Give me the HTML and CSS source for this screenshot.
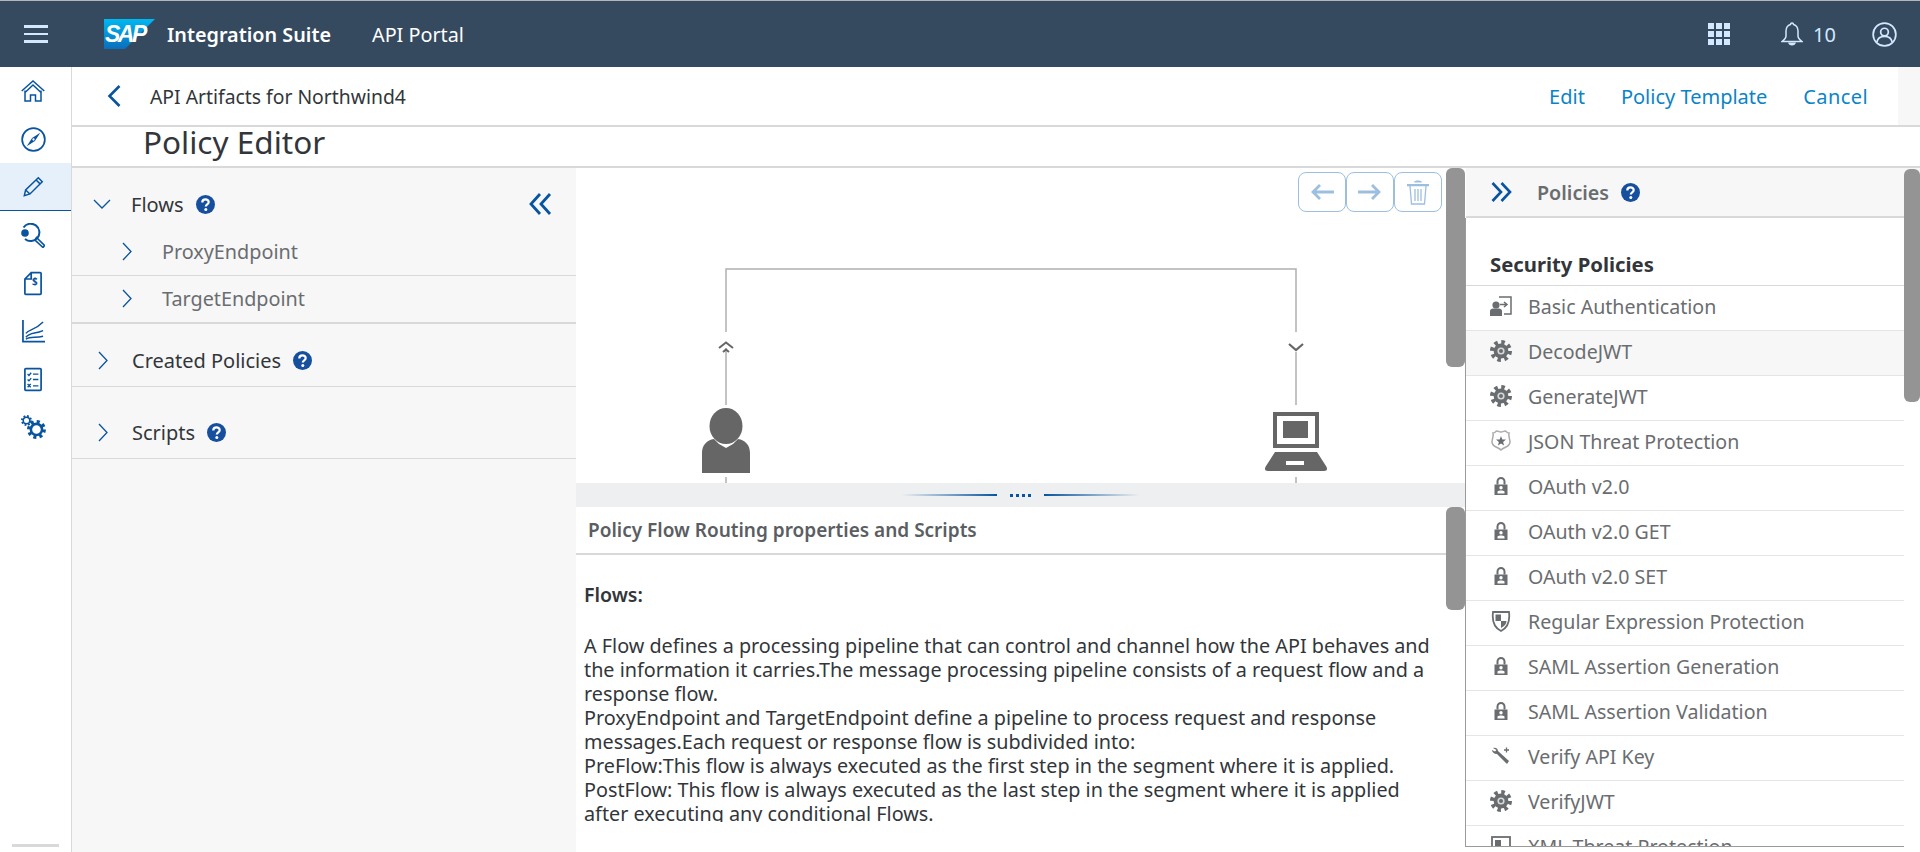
FILE: index.html
```html
<!DOCTYPE html>
<html lang="en">
<head>
<meta charset="utf-8">
<title>Policy Editor</title>
<link rel="stylesheet" href="styles.css">
</head>
<body>
<svg class="defs" width="0" height="0" aria-hidden="true">
  <defs>
    <g id="i-lock">
      <path d="M7.500 9.500V6.500a3.500 3.500 0 0 1 7 0v3" fill="none" stroke="currentColor" stroke-width="2"/>
      <path fill-rule="evenodd" d="M4.500 9.500h13v10.500h-13zM11 11a1.700 1.700 0 1 0 0 3.400A1.700 1.700 0 0 0 11 11zM7.500 16.500v2h7v-2c-1.500-1.200-5.500-1.200-7 0z" fill="currentColor"/>
    </g>
    <g id="i-gear">
      <circle cx="11" cy="11" r="8.800" fill="none" stroke="currentColor" stroke-width="4.400" stroke-dasharray="3.450 3.460"/>
      <circle cx="11" cy="11" r="7.400" fill="currentColor"/>
      <circle cx="11" cy="11" r="3.600" fill="#d8d8d8"/>
      <circle cx="11" cy="11" r="2" fill="currentColor"/>
    </g>
    <g id="i-gear-open">
      <circle cx="11" cy="11" r="9" fill="none" stroke="currentColor" stroke-width="4" stroke-dasharray="3.530 3.540"/>
      <circle cx="11" cy="11" r="6.500" fill="none" stroke="currentColor" stroke-width="3"/>
    </g>
    <g id="i-help">
      <circle cx="9.500" cy="9.500" r="9.500" fill="#174f9f"/>
      <path d="M6.300 7.400c0-1.900 1.400-3 3.200-3s3.200 1 3.200 2.700c0 2.300-2.900 2.300-2.900 4.400" fill="none" stroke="#fff" stroke-width="2.200"/>
      <circle cx="9.800" cy="14.500" r="1.500" fill="#fff"/>
    </g>
  </defs>
</svg>
<div class="topline"></div>
<header class="shell">
  <button class="burger" aria-label="Menu"><span></span><span></span><span></span></button>
  <svg class="sap" width="51" height="30" viewBox="0 0 51 30" aria-hidden="true">
    <defs><linearGradient id="sapg" x1="0" y1="0" x2="0" y2="1"><stop offset="0" stop-color="#00b8f1"/><stop offset="1" stop-color="#0a6ebd"/></linearGradient></defs>
    <path d="M0 0h51L21 30H0z" fill="url(#sapg)"/>
    <text x="1" y="23" class="sap-text">SAP</text>
  </svg>
  <span class="brand">Integration Suite</span>
  <span class="portal">API Portal</span>
  <div class="shell-right">
    <svg width="22" height="22" viewBox="0 0 22 22" aria-hidden="true">
      <g fill="#d1e8ff">
        <rect x="0" y="0" width="6" height="6"/><rect x="8" y="0" width="6" height="6"/><rect x="16" y="0" width="6" height="6"/>
        <rect x="0" y="8" width="6" height="6"/><rect x="8" y="8" width="6" height="6"/><rect x="16" y="8" width="6" height="6"/>
        <rect x="0" y="16" width="6" height="6"/><rect x="8" y="16" width="6" height="6"/><rect x="16" y="16" width="6" height="6"/>
      </g>
    </svg>
    <svg width="22" height="24" viewBox="0 0 22 24" class="bell" aria-hidden="true">
      <path d="M11 1c-1 0-1.500.8-1.500 1.500C6.500 3.500 5 6 5 9v5c0 2-2 4-4 5.500h20c-2-1.500-4-3.500-4-5.500V9c0-3-1.500-5.500-4.500-6.500C12.500 1.800 12 1 11 1z" fill="none" stroke="#d1e8ff" stroke-width="1.500"/>
      <path d="M7 20.500h8c-.5 2-2 3-4 3s-3.500-1-4-3z" fill="#d1e8ff"/>
    </svg>
    <span class="count">10</span>
    <svg width="25" height="25" viewBox="0 0 26 26" class="user" aria-hidden="true">
      <circle cx="13" cy="13" r="11.800" fill="none" stroke="#d1e8ff" stroke-width="1.800"/>
      <circle cx="13" cy="10.500" r="4" fill="none" stroke="#d1e8ff" stroke-width="1.800"/>
      <path d="M5 21c1-4.500 4-6 8-6s7 1.500 8 6" fill="none" stroke="#d1e8ff" stroke-width="1.800"/>
    </svg>
  </div>
</header>
<div class="body">
  <nav class="side">
    <a class="side-item"><svg width="24" height="22" viewBox="0 0 24 22" aria-hidden="true"><path d="M.7 11 12 1l11.300 10M4 10.500V21h5.500v-6h5v6H20V10.500M3.500 13 12 5l8.500 8" fill="none" stroke="currentColor" stroke-width="1.500"/></svg></a>
    <a class="side-item"><svg width="25" height="25" viewBox="0 0 26 26" aria-hidden="true"><circle cx="13" cy="13" r="11.800" fill="none" stroke="currentColor" stroke-width="1.800"/><path d="M20 6 14.500 14.500 6 20l5.500-8.500z" fill="currentColor"/><circle cx="13" cy="13" r="1.200" fill="#fff"/></svg></a>
    <a class="side-item active"><svg width="21" height="21" viewBox="0 0 24 24" aria-hidden="true"><path d="M1.500 22.500 3 16 17.500 2l4.500 4.500L8 20.500zM3 16l5 4.500M15 4.500l4.500 4.500" fill="none" stroke="currentColor" stroke-width="1.700"/></svg></a>
    <a class="side-item"><svg width="24" height="25" viewBox="0 0 24 25" aria-hidden="true"><path d="M2.500 4.500A8.700 8.700 0 1 1 4 16" fill="none" stroke="currentColor" stroke-width="2"/><circle cx="4" cy="10" r="3.800" fill="currentColor"/><path d="m14 17 1.500-2.500 8 8-1.500 2z" fill="none" stroke="currentColor" stroke-width="1.600"/></svg></a>
    <a class="side-item"><svg width="18" height="25" viewBox="0 0 20 26" aria-hidden="true"><path d="M8 1h10a1 1 0 0 1 1 1v22a1 1 0 0 1-1 1H2a1 1 0 0 1-1-1V8zM8 1v7H1" fill="none" stroke="currentColor" stroke-width="1.900"/><text x="12" y="15" class="dollar">$</text></svg></a>
    <a class="side-item"><svg width="23" height="23" viewBox="0 0 24 24" aria-hidden="true"><path d="M1 0v22.500h23" fill="none" stroke="currentColor" stroke-width="1.800"/><path d="M4 14C8 9 12 12 22 2M4 18c5-6 9-3 18-7M4 20c5-3 10-1 18-3" fill="none" stroke="currentColor" stroke-width="1.500"/></svg></a>
    <a class="side-item"><svg width="18" height="25" viewBox="0 0 20 26" aria-hidden="true"><rect x="1" y="1" width="18" height="24" rx="1" fill="none" stroke="currentColor" stroke-width="1.900"/><path d="m4 7 1.500 1.500L8 5.500M4 13l1.500 1.500L8 11.500M4 18l3.500 3.500M7.500 18 4 21.500M10 7h6M10 13h6M10 20h6" fill="none" stroke="currentColor" stroke-width="1.500"/></svg></a>
    <a class="side-item"><svg width="25" height="24" viewBox="0 0 25 24" aria-hidden="true"><g transform="translate(6 5) scale(.86)"><use href="#i-gear-open"/></g><g transform="translate(0 0) scale(.5)"><use href="#i-gear-open"/></g></svg></a>
    <span class="side-bar"></span>
  </nav>
  <main class="main">
    <div class="crumb">
      <div class="crumb-in">
        <svg class="back" width="14" height="22" viewBox="0 0 14 22" aria-hidden="true"><path d="M12.500 1 2.500 11l10 10" fill="none" stroke="#0854a0" stroke-width="2.600"/></svg>
        <span class="crumb-title">API Artifacts for Northwind4</span>
        <div class="actions"><a>Edit</a><a>Policy Template</a><a class="cancel">Cancel</a></div>
      </div>
      <div class="crumb-end"></div>
    </div>
    <h1 class="title">Policy Editor</h1>
    <div class="panes">
      <section class="left">
        <div class="sec sec-flows">
          <svg class="chev down" width="18" height="10" viewBox="0 0 18 10" aria-hidden="true"><path d="m1 1 8 8 8-8" fill="none" stroke="#0854a0" stroke-width="1.300"/></svg>
          <span>Flows</span>
          <svg class="help" width="19" height="19" viewBox="0 0 19 19" aria-hidden="true"><use href="#i-help"/></svg>
          <svg class="collapse" width="24" height="22" viewBox="0 0 24 22" aria-hidden="true"><path d="M11 1 2 11l9 10M21 1l-9 10 9 10" fill="none" stroke="#0854a0" stroke-width="2.800"/></svg>
        </div>
        <div class="sub"><svg class="chev" width="10" height="19" viewBox="0 0 10 19" aria-hidden="true"><path d="m1 1 8 8.500-8 8.500" fill="none" stroke="#0854a0" stroke-width="1.300"/></svg><span>ProxyEndpoint</span></div>
        <div class="sub sub-last"><svg class="chev" width="10" height="19" viewBox="0 0 10 19" aria-hidden="true"><path d="m1 1 8 8.500-8 8.500" fill="none" stroke="#0854a0" stroke-width="1.300"/></svg><span>TargetEndpoint</span></div>
        <div class="sec sec-created">
          <svg class="chev" width="10" height="19" viewBox="0 0 10 19" aria-hidden="true"><path d="m1 1 8 8.500-8 8.500" fill="none" stroke="#0854a0" stroke-width="1.300"/></svg>
          <span>Created Policies</span>
          <svg class="help" width="19" height="19" viewBox="0 0 19 19" aria-hidden="true"><use href="#i-help"/></svg>
        </div>
        <div class="sec sec-scripts">
          <svg class="chev" width="10" height="19" viewBox="0 0 10 19" aria-hidden="true"><path d="m1 1 8 8.500-8 8.500" fill="none" stroke="#0854a0" stroke-width="1.300"/></svg>
          <span>Scripts</span>
          <svg class="help" width="19" height="19" viewBox="0 0 19 19" aria-hidden="true"><use href="#i-help"/></svg>
        </div>
      </section>
      <section class="center">
        <div class="canvas">
          <div class="tools">
            <button><svg width="24" height="18" viewBox="0 0 24 18" aria-hidden="true"><path d="M24 9H3M10 2 3 9l7 7" fill="none" stroke="#9dbfdf" stroke-width="2.800"/></svg></button>
            <button><svg width="24" height="18" viewBox="0 0 24 18" aria-hidden="true"><path d="M0 9h21M14 2l7 7-7 7" fill="none" stroke="#9dbfdf" stroke-width="2.800"/></svg></button>
            <button><svg width="22" height="25" viewBox="0 0 22 25" aria-hidden="true"><path d="M0 4h22v2.200H0zM7 2.500C7 1 9 .500 11 .500s4 .5 4 2z" fill="#9dbfdf"/><path d="M3 6l1.500 18h13L19 6M8 9v12M11 9v12M14 9v12" fill="none" stroke="#9dbfdf" stroke-width="1.300"/></svg></button>
          </div>
          <svg class="flow" width="580" height="216" viewBox="0 0 580 216" aria-hidden="true">
            <g fill="none" stroke="#b0b0b0" stroke-width="1.500">
              <path d="M1 64V1h570v63M1 80v57M571 84v53M1 209v7M571 209v7"/>
            </g>
            <path d="M-6 80 1 74.500 8 80M-2 84 1 81.500 4 84" fill="none" stroke="#666" stroke-width="2"/>
            <path d="M564 76l7 6 7-6" fill="none" stroke="#666" stroke-width="2.200"/>
            <g fill="#666">
              <ellipse cx="1" cy="158" rx="16.500" ry="18"/>
              <path d="M-23 205v-20c0-8 5-13 12-14l5 5 7 4 7-4 5-5c7 1 12 6 12 14v20z"/>
              <path fill-rule="evenodd" d="M548 144h46v36h-46zM552 148v28h38v-28z"/>
              <rect x="558" y="153" width="25" height="17"/>
              <path fill-rule="evenodd" d="M550 184h42l9 14c2 3 1 5-2 5h-56c-3 0-4-2-2-5zM561 193v4h18v-4z"/>
            </g>
          </svg>
        </div>
        <div class="splitter"><i class="l"></i><b></b><b></b><b></b><b></b><i class="r"></i></div>
        <div class="props">
          <div class="props-head">Policy Flow Routing properties and Scripts</div>
          <div class="props-body">
            <h3>Flows:</h3>
            <p>A Flow defines a processing pipeline that can control and channel how the API behaves and the information it carries.The message processing pipeline consists of a request flow and a response flow.</p>
            <p>ProxyEndpoint and TargetEndpoint define a pipeline to process request and response messages.Each request or response flow is subdivided into:</p>
            <p>PreFlow:This flow is always executed as the first step in the segment where it is applied.</p>
            <p>PostFlow: This flow is always executed as the last step in the segment where it is applied after executing any conditional Flows.</p>
          </div>
        </div>
        <span class="thumb thumb-a"></span>
        <span class="thumb thumb-b"></span>
      </section>
      <aside class="right">
        <div class="pol-head">
          <svg class="expand" width="21" height="20" viewBox="0 0 21 20" aria-hidden="true"><path d="m1.500 1 8.500 9-8.500 9M10.500 1l8.500 9-8.500 9" fill="none" stroke="#0854a0" stroke-width="2.600"/></svg>
          <span>Policies</span>
          <svg class="help" width="19" height="19" viewBox="0 0 19 19" aria-hidden="true"><use href="#i-help"/></svg>
        </div>
        <div class="pol-frame">
          <h4>Security Policies</h4>
          <ul class="pol-list">
            <li><svg viewBox="0 0 22 22" aria-hidden="true"><path d="M9 2h12v17h-7" fill="none" stroke="currentColor" stroke-width="1.500"/><path d="M10 9.500h6M14 7l3 2.500-3 2.500" fill="none" stroke="currentColor" stroke-width="1.500"/><circle cx="6" cy="10" r="3.600" fill="currentColor"/><path d="M0 21v-5c0-1.500 1.500-2.500 3-2.500h6c1.500 0 3 1 3 2.500v5z" fill="currentColor"/></svg><span>Basic Authentication</span></li>
            <li class="hl"><svg viewBox="0 0 22 22" aria-hidden="true"><use href="#i-gear"/></svg><span>DecodeJWT</span></li>
            <li><svg viewBox="0 0 22 22" aria-hidden="true"><use href="#i-gear"/></svg><span>GenerateJWT</span></li>
            <li><svg viewBox="0 0 22 22" aria-hidden="true"><path d="M3 3c3 0 2-2 4-2 1 0 2 1 4 1s3-1 4-1c2 0 1 2 4 2-1 3 1 6 1 9 0 5-6 5-9 8-3-3-9-3-9-8 0-3 2-6 1-9z" fill="none" stroke="#aaa" stroke-width="1.500"/><path d="m11 6 1.300 3.400 3.700.2-2.900 2.300 1 3.600-3.100-2-3.100 2 1-3.600L6 9.600l3.700-.2z" fill="currentColor"/></svg><span>JSON Threat Protection</span></li>
            <li><svg viewBox="0 0 22 22" aria-hidden="true"><use href="#i-lock"/></svg><span>OAuth v2.0</span></li>
            <li><svg viewBox="0 0 22 22" aria-hidden="true"><use href="#i-lock"/></svg><span>OAuth v2.0 GET</span></li>
            <li><svg viewBox="0 0 22 22" aria-hidden="true"><use href="#i-lock"/></svg><span>OAuth v2.0 SET</span></li>
            <li><svg viewBox="0 0 22 22" aria-hidden="true"><path d="M3 2h16c1 8 0 15-8 19C3 17 2 10 3 2z" fill="none" stroke="currentColor" stroke-width="1.800"/><path d="M5.500 4.500H11V11H5.500zM11 11h5.500c0 3-2 5-5.500 7z" fill="currentColor"/></svg><span>Regular Expression Protection</span></li>
            <li><svg viewBox="0 0 22 22" aria-hidden="true"><use href="#i-lock"/></svg><span>SAML Assertion Generation</span></li>
            <li><svg viewBox="0 0 22 22" aria-hidden="true"><use href="#i-lock"/></svg><span>SAML Assertion Validation</span></li>
            <li><svg viewBox="0 0 22 22" aria-hidden="true"><path d="M3 3c3-1 5 1 5 3l11 10-2 3L7 9C4 9 2 7 2 5l3 1.500L6.500 5z" fill="currentColor"/><path d="M14 5h5M16.500 2.500v5" stroke="currentColor" stroke-width="1.300"/></svg><span>Verify API Key</span></li>
            <li><svg viewBox="0 0 22 22" aria-hidden="true"><use href="#i-gear"/></svg><span>VerifyJWT</span></li>
            <li><svg viewBox="0 0 22 22" aria-hidden="true"><rect x="2" y="2" width="18" height="18" fill="none" stroke="currentColor" stroke-width="1.800"/><path d="M5 5h6v6H5z" fill="currentColor"/></svg><span>XML Threat Protection</span></li>
          </ul>
        </div>
        <span class="thumb thumb-c"></span>
      </aside>
    </div>
  </main>
</div>
</body>
</html>
```
FILE: styles.css
```css
* { box-sizing: border-box; }
html, body { margin: 0; height: 100%; overflow: hidden; }
body { font-family: "Noto Sans", "Liberation Sans", sans-serif; color: #32363a; background: #fff; }
.defs { position: absolute; }
ul { list-style: none; margin: 0; padding: 0; }
h1, h3, h4, p { margin: 0; font-weight: normal; }
button { font: inherit; padding: 0; background: none; border: 0; }

.topline { height: 1px; background: #b5b5b5; }
.shell { height: 66px; background: #354a5f; display: flex; align-items: center; color: #fff; }
.burger { width: 24px; margin-left: 24px; display: flex; flex-direction: column; gap: 5px; }
.burger span { height: 2.5px; background: #d1e8ff; }
.sap { margin-left: 56px; }
.sap-text { font: italic 700 23px "Liberation Sans", sans-serif; fill: #fff; letter-spacing: -2.500px; }
.brand { margin-left: 12px; font-size: 19.800px; font-weight: 600; }
.portal { margin-left: 41px; font-size: 19.800px; }
.shell-right { margin-left: auto; display: flex; align-items: center; padding-right: 23px; }
.bell { margin-left: 51px; }
.count { margin-left: 10px; font-size: 20px; color: #d1e8ff; }
.user { margin-left: 36px; }

.body { display: flex; height: 785px; }
.side { width: 72px; flex: none; border-right: 1px solid #d9d9d9; position: relative; color: #0854a0; background: #fff; }
.side-item { height: 48px; display: flex; align-items: center; justify-content: center; padding-right: 5px; }
.side-item.active { background: #e5f0fa; border-bottom: 1px solid #0854a0; }
.side-bar { position: absolute; left: 12px; bottom: 5px; width: 47px; height: 3px; background: #d9d9d9; }

.main { flex: 1; min-width: 0; display: flex; flex-direction: column; }
.crumb { height: 60px; flex: none; border-bottom: 2px solid #d9d9d9; display: flex; }
.crumb-in { flex: 1; display: flex; align-items: center; padding-left: 35px; background: #fff; }
.crumb-end { width: 22px; background: #f7f7f7; }
.crumb-title { margin-left: 29px; font-size: 19.350px; color: #32363a; }
.actions { margin-left: auto; display: flex; gap: 36px; padding-right: 30px; font-size: 20px; color: #0a84c6; }
.cancel { letter-spacing: .4px; }
.title { height: 41px; flex: none; padding-left: 71px; font-size: 31.500px; line-height: 30px; border-bottom: 2px solid #d9d9d9; }

.panes { flex: 1; display: flex; min-height: 0; }
.left { width: 504px; flex: none; background: #f7f7f7; }
.sec { display: flex; align-items: center; font-size: 20px; position: relative; }
.sec .chev { margin-left: 26px; margin-right: 24px; }
.sec .help { margin-left: 12px; }
.sec-flows { height: 60px; padding-top: 12px; }
.sec-flows .chev.down { margin-left: 21px; margin-right: 20px; }
.collapse { position: absolute; left: 457px; top: 25px; }
.sub { height: 48px; display: flex; align-items: center; border-bottom: 1px solid #d9d9d9; font-size: 19.800px; color: #6a6d70; padding-left: 50px; }
.sub .chev { margin-right: 30px; }
.sub-last { border-bottom-width: 2px; padding-bottom: 2px; }
.sec-created { height: 63px; padding-top: 10px; border-bottom: 1px solid #d9d9d9; }
.sec-scripts { height: 72px; padding-top: 19px; border-bottom: 1px solid #d9d9d9; }

.center { width: 889px; flex: none; position: relative; display: flex; flex-direction: column; background: #fff; min-height: 0; overflow: hidden; }
.canvas { height: 315px; flex: none; position: relative; overflow: hidden; }
.tools { position: absolute; left: 722px; top: 4px; display: flex; }
.tools button { width: 48px; height: 40px; border: 1px solid #9dbfdf; border-radius: 8px; display: flex; align-items: center; justify-content: center; }
.flow { position: absolute; left: 149px; top: 100px; overflow: visible; }
.splitter { height: 24px; flex: none; background: #edeff0; display: flex; align-items: center; justify-content: center; gap: 3px; }
.splitter b { width: 3px; height: 3px; background: #0854a0; }
.splitter i { width: 95px; height: 2px; display: block; }
.splitter i.l { background: linear-gradient(to right, transparent, #0854a0); margin-right: 10px; }
.splitter i.r { background: linear-gradient(to left, transparent, #0854a0); margin-left: 10px; }
.props { flex: 1; min-height: 0; overflow: hidden; }
.props-head { height: 48px; padding-left: 12px; display: flex; align-items: center; font-size: 19px; font-weight: 600; color: #5a5e62; border-bottom: 2px solid #d9d9d9; }
.props-body { height: 267px; overflow: hidden; padding: 28px 30px 0 8px; font-size: 19.800px; line-height: 24px; }
.props-body h3 { font-size: 19.500px; font-weight: 600; margin-bottom: 27px; }
.thumb { position: absolute; width: 19px; background: #949494; border-radius: 6px; }
.thumb-a { right: 0; top: 0; height: 199px; }
.thumb-b { right: 0; top: 339px; height: 103px; }

.right { flex: 1; min-width: 0; position: relative; background: #fff; overflow: hidden; }
.pol-head { height: 50px; margin-left: 1px; display: flex; align-items: center; background: #f7f7f7; border-bottom: 2px solid #d9d9d9; font-size: 19.700px; font-weight: 600; color: #6a6d70; }
.expand { margin-left: 25px; }
.pol-head span { margin-left: 25px; }
.pol-head .help { margin-left: 12px; }
.pol-frame { height: 629px; width: 439px; border-left: 1px solid #9a9a9a; border-bottom: 1px solid #9a9a9a; overflow: hidden; }
.pol-frame h4 { padding: 34px 0 8px 24px; font-size: 20.300px; font-weight: 700; line-height: 25px; border-bottom: 1px solid #d9d9d9; }
.pol-list li { height: 45px; display: flex; align-items: center; gap: 16px; border-bottom: 1px solid #e5e5e5; color: #6a6d70; font-size: 19.600px; padding: 0 0 4px 24px; }
.pol-list li.hl { background: #f7f7f7; }
.pol-list li svg { width: 22px; height: 22px; flex: none; }
.thumb-c { right: 0; top: 1px; width: 16px; height: 233px; }
.dollar { font: 700 11px "Noto Sans", sans-serif; fill: currentColor; text-anchor: middle; }
```
